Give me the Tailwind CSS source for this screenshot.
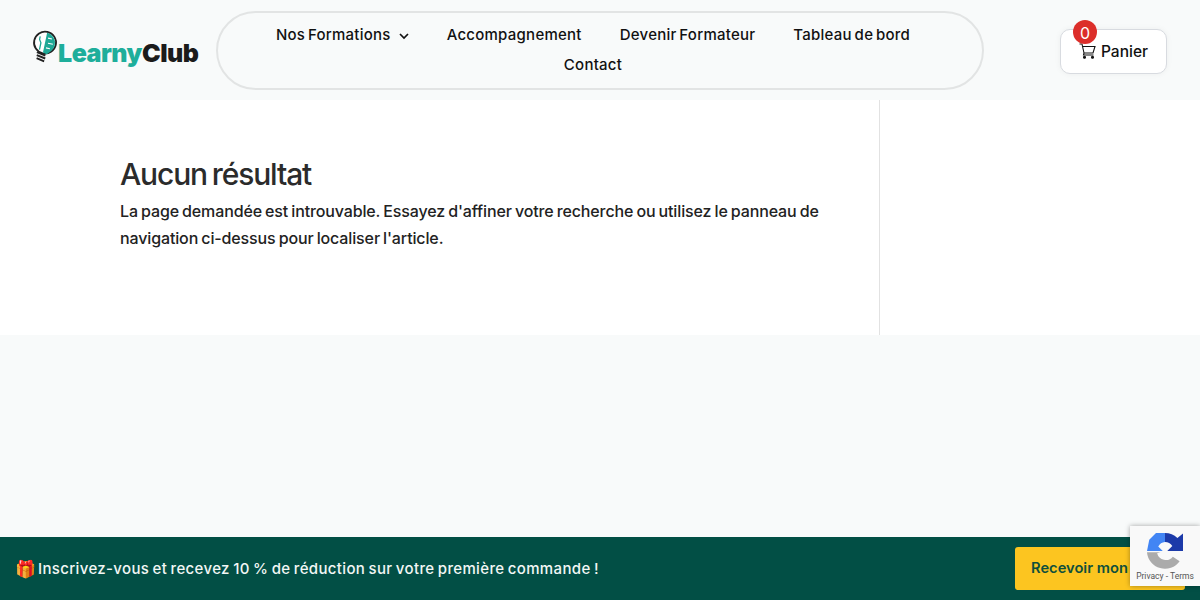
<!DOCTYPE html>
<html lang="fr">

<head>
    <meta charset="UTF-8">
    <meta name="viewport" content="width=device-width, initial-scale=1.0">
    <title>Aucun résultat - LearnyClub</title>
    <script src="https://cdn.jsdelivr.net/npm/@tailwindcss/browser@4"></script>
</head>

<body class="bg-[#f8fafa] h-[600px] overflow-hidden relative font-['Inter','Noto_Sans',sans-serif] text-[#111]">
    <!-- header -->
    <header class="h-[100px] flex items-center pl-[32px] pr-[33px]">
        <div class="w-[184px] shrink-0 flex items-start h-[40px] mt-[-1px]">
            <svg class="w-[26px] h-[35px] shrink-0 ml-[-1px] rotate-[12deg]" viewBox="0 0 26 34" fill="none">
                <circle cx="13" cy="12" r="11" fill="#fff" stroke="#222" stroke-width="1.800" />
                <path d="M13 2a10 10 0 0 1 10 10c0 5-3 8-6 11l-4-1z" fill="#1ea896" />
                <path d="M15 7h4M16 12h5M15 17h4" stroke="#fff" stroke-width="1.200" />
                <path d="M7 7v3l2 3v7" stroke="#1ea896" stroke-width="1.300" />
                <path d="M7 23l9 1.500M7.500 26l9 1.500M8 29l8 1.500" stroke="#222" stroke-width="2" />
            </svg>
            <span class="font-['Inter',sans-serif] font-black text-[25px] leading-[30px] mt-[8px] tracking-[-0.5px] text-[#1eae9b] ml-[1px]">Learny<span class="text-[#1b1b1b]">Club</span></span>
        </div>
        <nav class="w-[768px] h-[79px] border-2 border-[#e2e4e4] rounded-[40px] flex flex-wrap content-center justify-center text-[15px] leading-[30px] font-medium tracking-[0.25px] [word-spacing:-1.500px] pl-[26px] pr-[40px]">
            <a class="flex items-center mx-[19px]">Nos Formations
                <svg class="w-[10px] h-[7px] ml-[8px] mt-[2px]" viewBox="0 0 10 7" fill="none">
                    <path d="M1 1l4 4 4-4" stroke="#111" stroke-width="1.700" />
                </svg>
            </a>
            <a class="mx-[19px]">Accompagnement</a>
            <a class="mx-[19px]">Devenir Formateur</a>
            <a class="mx-[19px]">Tableau de bord</a>
            <a class="mx-[19px]">Contact</a>
        </nav>
        <div class="ml-auto relative w-[107px] h-[45px] mt-[2px] bg-white border border-[#d8dbe0] rounded-[10px] shadow-[0_0_6px_rgba(0,0,0,0.05)] flex items-center justify-center gap-[5px] text-[15.500px] font-medium">
            <span class="absolute left-[12px] top-[-10px] w-[24px] h-[24px] rounded-full bg-[#dc2e2a] text-white text-[16px] font-normal leading-[27px] text-center">0</span>
            <svg class="w-[17px] h-[16px] mt-[-1px]" viewBox="0 0 17 16" fill="none" stroke="#111" stroke-width="1.100">
                <path d="M0.500 1h2.500l2 9h9l2-6.500H3.600M5 10l-0.500 2h10" />
                <circle cx="5.500" cy="14.300" r="1" fill="#111" />
                <circle cx="13.500" cy="14.300" r="1" fill="#111" />
            </svg>
            <span class="mt-[1px]">Panier</span>
        </div>
    </header>

    <!-- contenu -->
    <main class="h-[235px] bg-white flex">
        <div class="w-[880px] border-r border-[#e2e2e2] pl-[120px] pr-[40px] pt-[55px]">
            <h1 class="text-[30px] leading-[38px] font-medium text-[#2b2b2b] tracking-[-1.150px] [word-spacing:-2px]">Aucun résultat</h1>
            <p class="mt-[5px] text-[16px] leading-[27px] font-medium text-[#222] tracking-[-0.130px] [word-spacing:-1px]">La page demandée est introuvable. Essayez d'affiner votre recherche ou utilisez le panneau de navigation ci-dessus pour localiser l'article.</p>
        </div>
    </main>

    <!-- bandeau promo -->
    <div class="absolute left-0 right-0 bottom-0 h-[63px] bg-[#024f45] flex items-center pl-[15px] pr-[15px]">
        <span class="text-[17px] leading-[20px] w-[23px] shrink-0">🎁</span>
        <span class="text-[15px] leading-[20px] font-medium text-[#f2f7f5] tracking-[0.35px] [word-spacing:-1px]">Inscrivez-vous et recevez 10 % de réduction sur votre première commande !</span>
        <a class="ml-auto w-[170px] h-[43px] bg-[#fcc520] rounded-[3px] pl-[16px] leading-[43px] text-[14.700px] font-semibold text-[#0f4f3c] whitespace-nowrap">Recevoir mon</a>
    </div>

    <!-- badge recaptcha -->
    <div class="absolute left-[1130px] top-[526px] w-[70px] h-[60px] bg-[#f9f9f9] shadow-[0_0_5px_rgba(0,0,0,0.35)] flex flex-col items-center">
        <svg class="w-[36px] h-[36px] mt-[7px]" viewBox="0 0 64 64">
            <path d="M32 0A32 32 0 0 1 54 9L64 1V32H36L45 23A16 16 0 0 0 32 16Z" fill="#1c3aa9" />
            <path d="M32 0H16L4 12L0 32H28L20 24A15 15 0 0 1 32 16Z" fill="#4285f4" />
            <path d="M0 34A32 32 0 0 0 58 50L46 42A16 16 0 0 1 18 36L24 34Z" fill="#ababab" />
        </svg>
        <span class="text-[8.500px] leading-[10px] mt-[2px] text-[#555] font-['Roboto',sans-serif] whitespace-nowrap">Privacy - Terms</span>
    </div>
</body>

</html>
